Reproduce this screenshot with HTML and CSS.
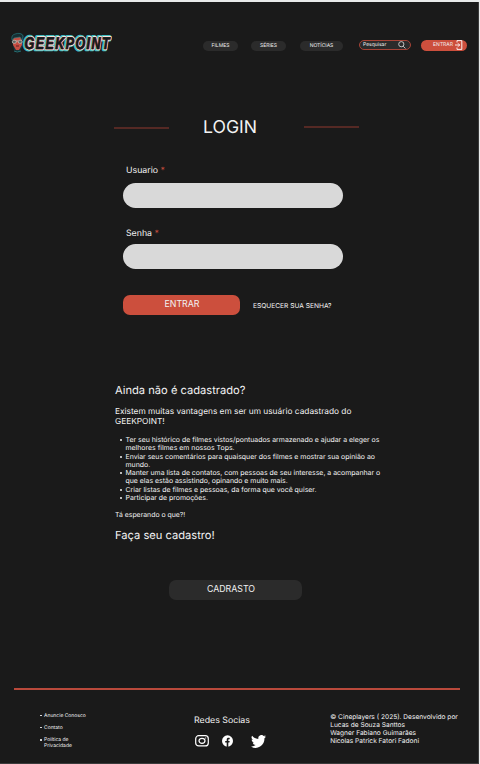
FILE: index.html
```html
<!DOCTYPE html>
<html lang="pt-BR">
<head>
<meta charset="utf-8">
<title>Geekpoint - Login</title>
<link rel="stylesheet" href="styles.css">
</head>
<body>
<div class="page">
  <header class="header">
    <svg class="logo" width="104" height="24" viewBox="0 0 104 24" role="img" aria-label="Geekpoint">
      <path d="M2 9Q0 3 5 2Q12-1 14 4L13 14L9 20L4 18Z" fill="#17363b"/>
      <path d="M3 8L4 5L12 5L12 13L9 18L6 18L3 13Z" fill="#c64e43"/>
      <path d="M2 8Q1 3 5 2Q11 0 13 4L12 8L10 5L4 6Z" fill="#172e33" stroke="#2a7d80" stroke-width=".6"/>
      <g fill="#5e6260" stroke="#c9c8c0" stroke-width=".7"><rect x="2.3" y="8.3" width="4" height="3" rx="1.5"/><rect x="8.2" y="8.3" width="4" height="3" rx="1.5"/><path d="M6 9H8"/></g>
      <path d="M6 14H9" stroke="#651f24"/><path d="M4 19Q7 21 11 19" stroke="#257074" fill="none"/>
      <g class="wordmark" transform="scale(.74 1)">
        <text x="18.8" y="17.2" textLength="115" stroke="#3fbcc0" stroke-width="4.6">GEEKPOINT</text>
        <text x="19.8" y="17" textLength="115" stroke="#f6e3da" stroke-width="2.5">GEEKPOINT</text>
        <text x="20.2" y="17" textLength="115" fill="#d63d38" stroke="#d63d38" stroke-width=".6">GEEKPOINT</text>
        <text x="19.3" y="17" textLength="115" fill="#101b1e" stroke="#101b1e" stroke-width=".6">GEEKPOINT</text>
      </g>
    </svg>
    <nav class="nav">
      <a class="pill">FILMES</a>
      <a class="pill">SÉRIES</a>
      <a class="pill pill-wide">NOTÍCIAS</a>
    </nav>
    <div class="search"><span>Pesquisar</span>
      <svg width="8" height="8" viewBox="0 0 8 8" fill="none" stroke="#e4e4e4" stroke-width=".8"><circle cx="3.3" cy="3.2" r="2.6"/><path d="M5.2 5.2L7.4 7.5"/></svg>
    </div>
    <a class="signin"><span>ENTRAR</span>
      <svg width="8" height="10" viewBox="0 0 8 10" fill="none" stroke="#fff" stroke-width=".9"><path d="M2 2.5V.6H6.8V9.4H2V7.5M0 5H4.5M3 3.3L4.7 5L3 6.7"/></svg>
    </a>
  </header>

  <main class="main">
    <div class="title"><i class="rule"></i><h1>LOGIN</h1><i class="rule rule-right"></i></div>
    <form class="form">
      <label for="user">Usuario <b>*</b></label>
      <input id="user" type="text">
      <label for="pass">Senha <b>*</b></label>
      <input id="pass" type="password">
      <div class="actions"><button type="button" class="submit">ENTRAR</button><a class="forgot">ESQUECER SUA SENHA?</a></div>
    </form>
    <section class="signup">
      <h2>Ainda não é cadastrado?</h2>
      <p class="lead">Existem muitas vantagens em ser um usuário cadastrado do<br>GEEKPOINT!</p>
      <ul>
        <li>Ter seu histórico de filmes vistos/pontuados armazenado e ajudar a eleger os<br>melhores filmes em nossos Tops.</li>
        <li>Enviar seus comentários para quaisquer dos filmes e mostrar sua opinião ao<br>mundo.</li>
        <li>Manter uma lista de contatos, com pessoas de seu interesse, a acompanhar o<br>que elas estão assistindo, opinando e muito mais.</li>
        <li>Criar listas de filmes e pessoas, da forma que você quiser.</li>
        <li>Participar de promoções.</li>
      </ul>
      <p class="ask">Tá esperando o que?!</p>
      <h2 class="cta">Faça seu cadastro!</h2>
      <button type="button" class="register">CADRASTO</button>
    </section>
  </main>

  <footer class="footer">
    <ul class="links"><li>Anuncie Conosco</li><li>Contato</li><li>Política de<br>Privacidade</li></ul>
    <div class="social">
      <h3>Redes Socias</h3>
      <div class="icons">
        <svg width="14" height="12" viewBox="0 0 14 12" fill="none" stroke="#fff" stroke-width="1.2"><rect x=".7" y=".7" width="12.6" height="10.2" rx="3"/><ellipse cx="7" cy="5.8" rx="3" ry="2.5"/><path d="M10.2 3H11.2" stroke-width="1"/></svg>
        <svg width="11" height="12" viewBox="0 0 11 12"><ellipse cx="5.5" cy="6" rx="5.5" ry="5.7" fill="#fff"/><path d="M4.7 12V7.5H3.2V5.9H4.7V4.8C4.7 3.2 5.6 2.6 7.7 2.9V4.2C6.6 4.1 6.3 4.3 6.3 5V5.9H7.7L7.4 7.5H6.3V12Z" fill="#1a1a1a"/></svg>
        <svg width="15" height="13" viewBox="0 0 24 20" preserveAspectRatio="none"><path fill="#fff" d="M24 2.4a10 10 0 0 1-2.8.8A5 5 0 0 0 23.3.5a10 10 0 0 1-3.1 1.2A4.9 4.9 0 0 0 11.8 6.2 14 14 0 0 1 1.7 1a4.9 4.9 0 0 0 1.5 6.6 5 5 0 0 1-2.2-.6c0 2.3 1.6 4.4 3.9 4.9a5 5 0 0 1-2.2.1 4.9 4.9 0 0 0 4.6 3.4A9.9 9.9 0 0 1 0 17.5 14 14 0 0 0 21.5 5 10 10 0 0 0 24 2.4z"/></svg>
      </div>
    </div>
    <p class="credits">© Cineplayers ( 2025). Desenvolvido por<br>Lucas de Souza Santtos<br>Wagner Fabiano Guimarães<br>Nicolas Patrick Fatori Fadoni</p>
  </footer>
</div>
</body>
</html>
```

FILE: styles.css
```css
* { box-sizing: border-box; margin: 0; padding: 0; }
body { background: #e8eaea; padding-top: 2px; font-family: Inter, sans-serif; color: #f2f2f2; text-rendering: geometricPrecision; overflow: hidden; }
.page { width: 478.5px; height: 762px; background: #1a1a1a; border-right: 1px solid #3b3b3b; border-bottom: 1px solid #3b3b3b; }
h1, h2, h3, b { font-weight: 400; }
ul { list-style: none; }
button { border: 0; font-family: inherit; color: #f2f2f2; }

.header { display: flex; height: 52px; padding: 30px 0 0 10px; }
.logo { flex: none; overflow: visible; }
.wordmark { font: italic 900 17px "Liberation Sans", sans-serif; stroke-linejoin: round; fill: none; }
.nav { display: flex; gap: 13px; margin: 9px 0 0 89px; }
.pill { width: 35px; height: 10px; border-radius: 5px; background: #2b2b2b; font-size: 5px; line-height: 10px; text-align: center; }
.pill-wide { width: 43px; margin-left: 1px; }
.search { display: flex; justify-content: space-between; width: 52px; height: 10px; margin: 8px 0 0 16px; padding: 0 4px 0 3px; border: 1px solid #a84336; border-radius: 5px; background: #2b2b2b; font-size: 5px; line-height: 9px; }
.signin { display: flex; justify-content: flex-end; gap: 1.5px; width: 46px; height: 11px; margin: 7.5px 0 0 10px; padding-right: 4.5px; border-radius: 5.5px; background: #cc4f3d; font-size: 5px; line-height: 10px; }

.title { display: flex; padding: 64px 0 0 114px; height: 88px; }
.title h1 { width: 54px; margin: -2px 47px 0 34px; font-size: 17.6px; line-height: 24px; white-space: nowrap; }
.rule { width: 55px; height: 2px; margin-top: 9px; background: #552924; }
.rule-right { margin-top: 8px; }
.form { padding: 23px 0 0 123px; height: 216px; }
.form label { display: block; height: 18px; padding-left: 3px; font-size: 8.75px; line-height: 12px; }
.form b { color: #cc4f3d; }
.form input { display: block; width: 219.5px; height: 25px; margin-bottom: 20px; border: 0; border-radius: 13px; background: #d9d9d9; }
.form input:last-of-type { margin-top: -2px; }
.actions { display: flex; margin-top: 26px; }
.submit { width: 117px; height: 20px; padding: 0 0 3px 1px; border-radius: 7px; background: #cc4f3d; font-size: 8.8px; }
.forgot { margin: 6px 0 0 13px; font-size: 6.65px; line-height: 10px; }

.signup { padding: 25px 0 0 115px; }
.signup h2 { font-size: 11.15px; line-height: 14px; }
.lead { margin-top: 10px; font-size: 8.32px; line-height: 10px; }
.signup ul { margin: 9px 0 8px 10.5px; font-size: 6.93px; line-height: 8.27px; }
li { position: relative; }
li::before { content: ""; position: absolute; left: -6px; top: 3px; width: 2px; height: 2px; border-radius: 50%; background: #f2f2f2; }
.ask { font-size: 6.9px; line-height: 9px; }
.signup .cta { margin-top: 8.5px; }
.register { display: block; width: 133px; height: 20px; margin: 38.5px 0 0 54px; padding: 0 9px 3px 0; border-radius: 7px; background: #2b2b2b; font-size: 8.8px; }

.footer { display: flex; width: 446px; margin: 88px 0 0 14px; border-top: 2px solid #b9493b; }
.links { width: 150px; padding: 22.5px 0 0 30px; font-size: 5px; line-height: 6px; }
.links li { margin-bottom: 6.3px; }
.links li::before { left: -4px; top: 2px; width: 1.5px; height: 1.5px; }
.social { width: 136px; padding: 24.5px 0 0 30px; }
.social h3 { font-size: 8.8px; line-height: 12px; }
.icons { display: flex; align-items: center; margin: 8px 0 0 1px; }
.icons svg + svg { margin-left: 13px; }
.icons svg:last-child { margin-left: 18px; }
.credits { padding: 23px 0 0 30.2px; font-size: 6.6px; line-height: 8.1px; white-space: nowrap; }
```
